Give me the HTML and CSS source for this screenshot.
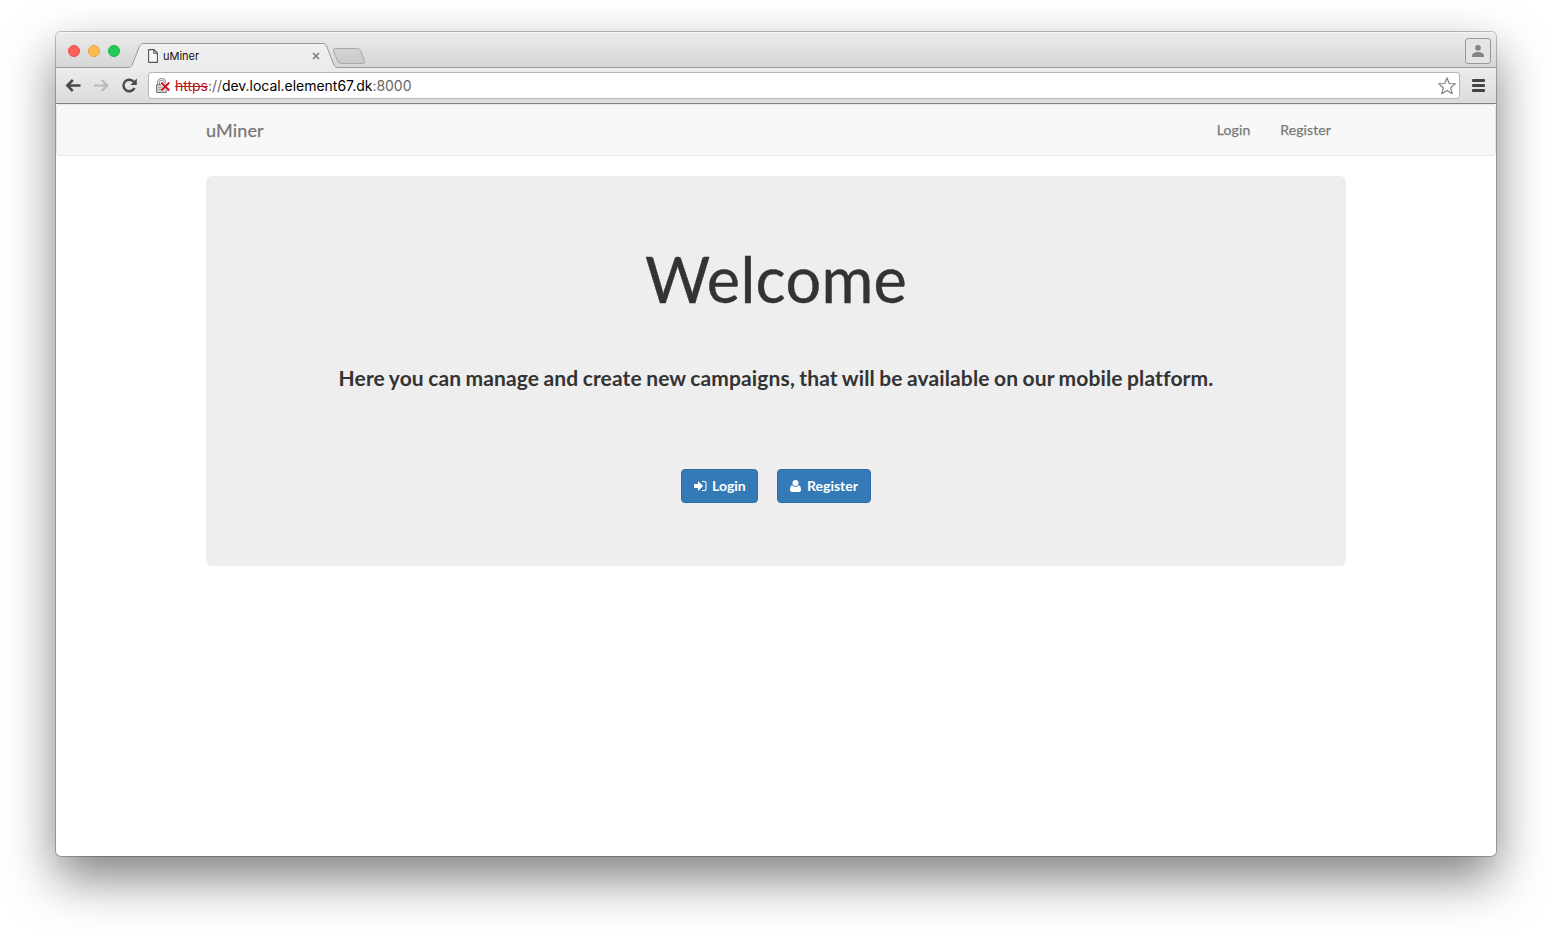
FILE: index.html
```html
<!DOCTYPE html>
<html lang="en">
<head>
<meta charset="utf-8">
<title>uMiner</title>
<link rel="stylesheet" href="styles.css">
</head>
<body>
<div class="window">
  <div class="tabstrip">
    <div class="lights"><i class="light red"></i><i class="light yellow"></i><i class="light green"></i></div>
    <div class="tab">
      <svg class="tab-shape" width="240" height="26" viewBox="0 0 240 26">
        <defs>
          <linearGradient id="tabFill" x1="0" y1="0" x2="0" y2="1"><stop offset="0" stop-color="#f1f1f1"/><stop offset="1" stop-color="#ebebeb"/></linearGradient>
          <linearGradient id="newFill" x1="0" y1="0" x2="0" y2="1"><stop offset="0" stop-color="#d4d4d4"/><stop offset="1" stop-color="#c9c9c9"/></linearGradient>
        </defs>
        <path d="M-3 26V24.500C.5 24.500 1.500 23.500 2.500 21L9 4.500C10.200 1.500 11.200.5 14 .5H192C195 .5 196 1.500 197.200 4.500L203.500 21C204.500 23.500 205.500 24.500 209 24.500V26Z" fill="url(#tabFill)"/>
        <path d="M-3 24.500C.5 24.500 1.500 23.500 2.500 21L9 4.500C10.200 1.500 11.200.5 14 .5H192C195 .5 196 1.500 197.200 4.500L203.500 21C204.500 23.500 205.500 24.500 209 24.500" fill="none" stroke="#999"/>
        <path d="M205.500 5.500H227.500Q230 5.500 231 8L234.300 17.500Q235.300 20.500 232.500 20.500H212Q208.500 20.500 207.300 17.500L203.500 8Q202.800 5.500 205.500 5.500Z" fill="url(#newFill)" stroke="#a9a9a9"/>
      </svg>
      <svg class="page-icon" width="10" height="14" viewBox="0 0 10 14"><path d="M.6.6H6L9.400 4V13.400H.6ZM5.800.8V4.300H9.400" fill="#f7f7f7" stroke="#555" stroke-width="1.100"/></svg>
      <span class="tab-title">uMiner</span>
      <svg class="tab-close" width="8" height="8" viewBox="0 0 8 8"><path d="M1 1L7 7M7 1L1 7" stroke="#777" stroke-width="1.500"/></svg>
    </div>
    <div class="profile"><svg width="14" height="14" viewBox="0 0 14 14" fill="#858585"><circle cx="7" cy="3.800" r="2.900"/><path d="M1 13V11.500C1 9.200 4 8 7 8S13 9.200 13 11.500V13Z"/></svg></div>
  </div>
  <div class="toolbar">
    <svg class="nav-icon" width="16" height="14" viewBox="0 0 16 14" fill="none" stroke="#4a4a4a" stroke-width="2.500"><path d="M7.800 1L2.300 6.500L7.800 12M2.300 6.500H15.500"/></svg>
    <svg class="nav-icon forward" width="16" height="14" viewBox="0 0 16 14" fill="none" stroke="#b9b9b9" stroke-width="2.200"><path d="M8.700 1L14.200 6.500L8.700 12M14.200 6.500H1"/></svg>
    <svg class="nav-icon reload" width="16" height="16" viewBox="0 0 16 16"><path d="M12.800 3.800A5.800 5.800 0 1 0 13.500 10" fill="none" stroke="#4a4a4a" stroke-width="2.500"/><path d="M15.800.5V6.900H9.400Z" fill="#4a4a4a"/></svg>
    <div class="address">
      <svg class="lock" width="16" height="16" viewBox="0 0 16 16"><path d="M3.500 7V4.500A3.200 3.200 0 0 1 9.900 4.500V7" fill="none" stroke="#888" stroke-width="2.800"/><path d="M3.500 7V4.500A3.200 3.200 0 0 1 9.900 4.500V7" fill="none" stroke="#e6e6e6" stroke-width="1.200"/><rect x="1.500" y="6.500" width="10" height="8" rx=".5" fill="#cfcfcf" stroke="#777"/><path d="M3 9.500H10M3 11.500H10" stroke="#b0b0b0"/><path d="M6.500 4.800L14 12.300M14 4.800L6.500 12.300" stroke="#fff" stroke-width="3.200"/><path d="M6.300 4.600L14.200 12.500M14.200 4.600L6.300 12.500" stroke="#c8101c" stroke-width="2"/></svg>
      <span class="url"><s>https</s><span class="dim">://</span>dev.local.element67.dk<span class="dim">:8000</span></span>
      <svg class="star" width="18" height="18" viewBox="0 0 18 18"><path d="M9 .9L11.300 6.500L17.300 6.900L12.700 10.800L14.200 16.800L9 13.500L3.800 16.800L5.300 10.800L.7 6.900L6.700 6.500Z" fill="#fff" stroke="#808080" stroke-width="1.200" stroke-linejoin="round"/></svg>
    </div>
    <svg class="menu" width="13" height="13" viewBox="0 0 13 13" fill="#444"><rect width="13" height="3" rx="1"/><rect y="5" width="13" height="3" rx="1"/><rect y="10" width="13" height="3" rx="1"/></svg>
  </div>
  <nav class="navbar">
    <div class="container nav-row">
      <a class="brand">uMiner</a>
      <div class="links"><a class="nav-login">Login</a><a class="nav-register">Register</a></div>
    </div>
  </nav>
  <main class="container jumbotron">
    <h1>Welcome</h1>
    <p class="lead">Here you can manage and create new campaigns, that will be available on our mobile platform.</p>
    <div class="actions">
      <a class="btn btn-login"><svg width="13" height="12" viewBox="0 0 13 12"><path d="M0 4H4V1L9.200 6L4 11V8H0Z" fill="#fff"/><path d="M8 1.500H10.500Q12 1.500 12 3V9Q12 10.500 10.500 10.500H8" fill="none" stroke="#fff" stroke-width="1.100"/></svg><span>Login</span></a>
      <a class="btn btn-register"><svg width="11" height="12" viewBox="0 0 11 12" fill="#fff"><circle cx="5.500" cy="3" r="3"/><path d="M2.300 5.200C3.200 6.300 4.200 6.800 5.500 6.800S7.800 6.300 8.700 5.200C10.500 5.500 11 7.500 11 9.700Q11 12 9 12H2Q0 12 0 9.700C0 7.500.5 5.500 2.300 5.200Z"/></svg><span>Register</span></a>
    </div>
  </main>
</div>
</body>
</html>
```

FILE: styles.css
```css
* { box-sizing: border-box; }
html, body { margin: 0; height: 100%; overflow: hidden; background: #fff; }
body { padding: 32px 56px 80px; font-family: Lato, sans-serif; color: #333; }
svg { display: block; flex: none; }
.window {
  height: 824px;
  background: #fff;
  border-radius: 5px;
  box-shadow: 0 0 0 1px rgba(0,0,0,.2), 0 0 2px rgba(0,0,0,.15), 0 22px 50px rgba(0,0,0,.5);
}
.tabstrip {
  display: flex;
  height: 36px;
  background: linear-gradient(#ebebeb, #d6d6d6);
  border-top: 1px solid #f6f6f6;
  border-bottom: 1px solid #999;
  border-radius: 5px 5px 0 0;
}
.lights { display: flex; gap: 8px; padding: 12px 0 0 12px; width: 74px; }
.light { width: 12px; height: 12px; border-radius: 50%; border: 1px solid; }
.red { background: #fc605b; border-color: #e8504b; }
.yellow { background: #fdbc4e; border-color: #e5a33d; }
.green { background: #22cb58; border-color: #1fb14d; }
.tab { position: relative; display: flex; align-items: center; width: 240px; height: 26px; margin-top: 10px; padding-left: 18px; font: 11px Inter, sans-serif; color: #111; }
.tab-shape { position: absolute; left: 0; top: 0; overflow: visible; }
.page-icon, .tab-title, .tab-close { position: relative; }
.tab-title { margin-left: 5px; width: 36px; }
.tab-close { margin-left: 113px; }
.profile { display: flex; align-items: center; justify-content: center; width: 26px; height: 26px; margin: 5px 5px 0 auto; border: 1px solid #999; border-radius: 3px; background: #e4e4e4; }
.toolbar { display: flex; align-items: center; height: 36px; padding: 0 11px 0 9px; background: linear-gradient(#ececec, #dbdbdb); border-bottom: 1px solid #808080; }
.forward { margin-left: 12px; }
.reload { margin-left: 12px; }
.address { display: flex; align-items: center; flex: 1; height: 27px; margin-left: 11px; padding: 0 3px 0 6px; background: #fff; border: 1px solid #b5b5b5; border-radius: 3px; }
.url { margin-left: 4px; font: 14px Inter, sans-serif; letter-spacing: -.03px; color: #000; }
.url s { color: #b5121b; }
.dim { color: #666; }
.star { margin-left: auto; }
.menu { margin-left: 12px; }
.navbar { height: 52px; background: #f8f8f8; border: 1px solid #e7e7e7; border-radius: 4px; }
.container { width: 1140px; margin: 0 auto; }
.nav-row { display: flex; align-items: center; justify-content: space-between; height: 50px; padding-right: 15px; color: #777; -webkit-text-stroke: .25px #777; }
.brand { font-size: 18px; line-height: 20px; letter-spacing: .15px; }
.links { display: flex; gap: 30px; font-size: 14px; line-height: 20px; letter-spacing: .1px; }
.jumbotron { display: flex; flex-direction: column; align-items: center; height: 390px; margin-top: 20px; padding-top: 68px; background: #eee; border-radius: 6px; }
h1 { margin: 0; font-size: 63px; font-weight: 400; line-height: 70px; letter-spacing: .3px; -webkit-text-stroke: .4px #333; }
.lead { margin: 49px 0 0; font-size: 21px; font-weight: 700; line-height: 30px; letter-spacing: .135px; word-spacing: -.9px; white-space: nowrap; font-variant-ligatures: none; }
.actions { display: flex; gap: 19px; margin-top: 76px; }
.btn { display: flex; align-items: center; height: 34px; padding-left: 12px; background: #337ab7; border: 1px solid #2e6da4; border-radius: 4px; color: #fff; font-size: 14px; font-weight: 700; line-height: 20px; }
.btn-login { width: 77px; }
.btn-login span { margin-left: 5px; }
.btn-register { width: 94px; }
.btn-register span { margin-left: 6px; }
```
